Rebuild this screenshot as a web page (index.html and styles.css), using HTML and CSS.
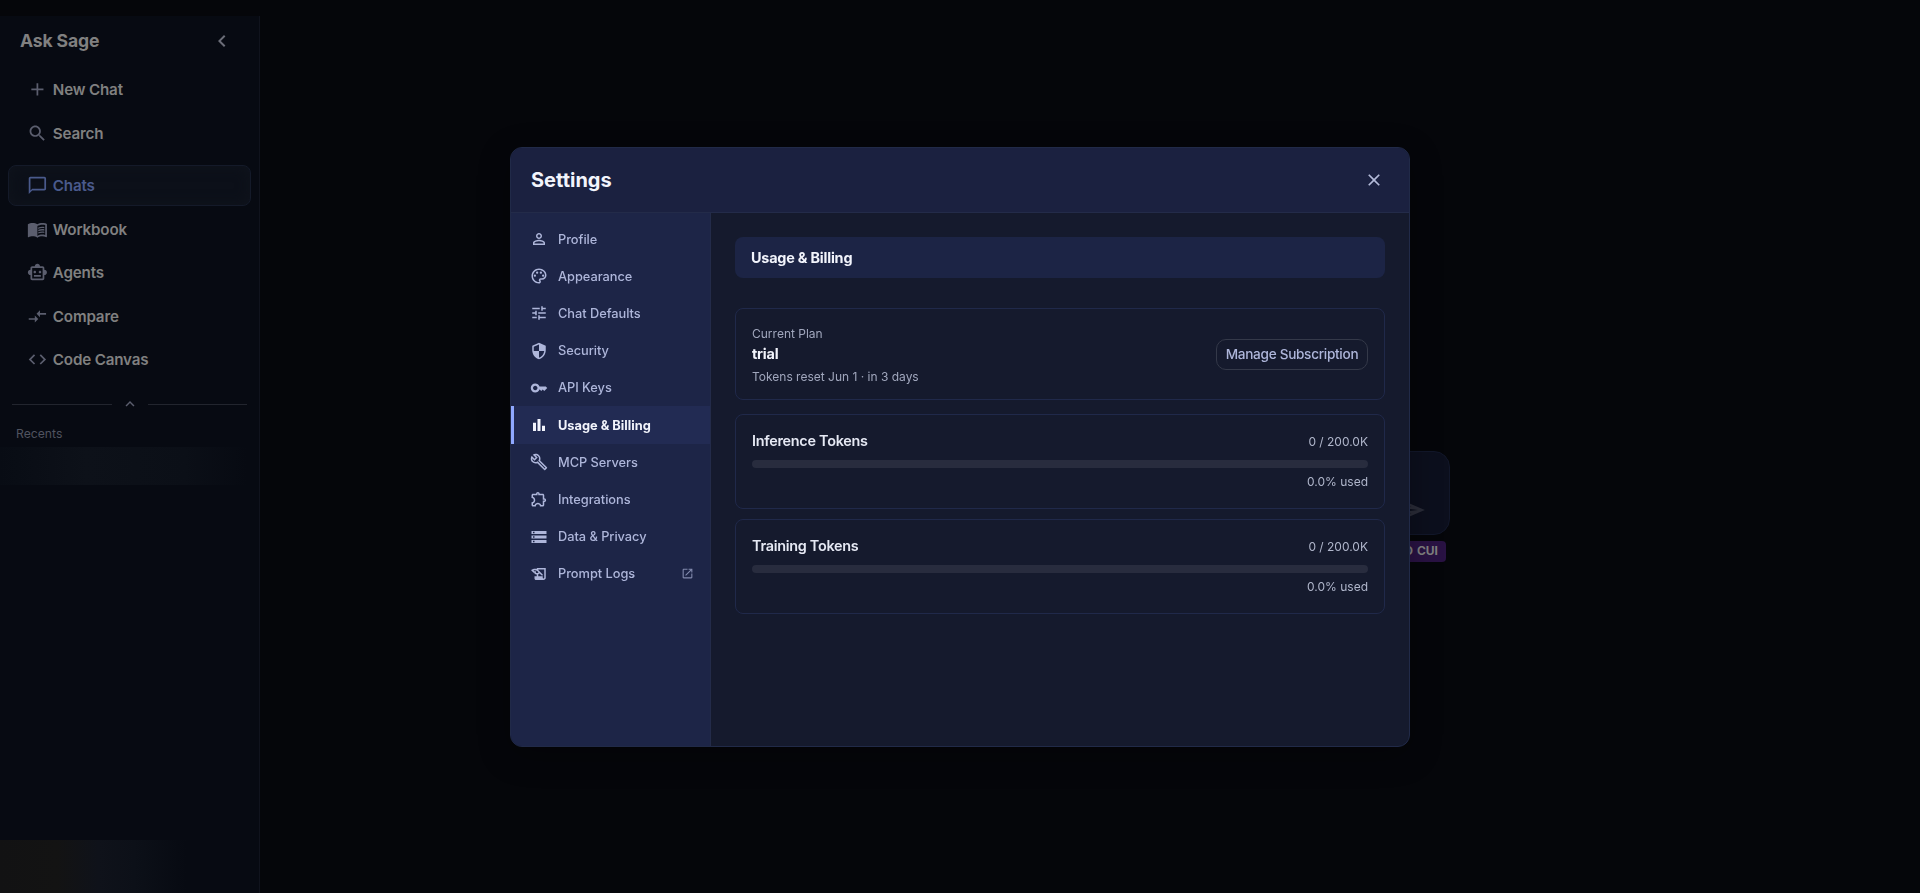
FILE: index.html
```html
<!DOCTYPE html>
<html lang="en">
<head>
  <meta charset="UTF-8">
  <title>Ask Sage</title>
  <link rel="stylesheet" href="styles.css">
</head>
<body>
  <div class="app">
    <aside class="sidebar">
      <div class="sidebar-header">
        <span class="brand">Ask Sage</span>
        <svg class="icon collapse" viewBox="0 0 24 24"><path d="M15.41 7.41 14 6l-6 6 6 6 1.41-1.41L10.83 12z"/></svg>
      </div>
      <nav class="side-nav">
        <a class="side-link"><svg class="icon" viewBox="0 0 24 24"><path d="M19 13h-6v6h-2v-6H5v-2h6V5h2v6h6v2z"/></svg>New Chat</a>
        <a class="side-link"><svg class="icon" viewBox="0 0 24 24"><path d="M15.5 14h-.79l-.28-.27C15.41 12.59 16 11.11 16 9.5 16 5.91 13.09 3 9.5 3S3 5.91 3 9.5 5.91 16 9.5 16c1.61 0 3.09-.59 4.23-1.57l.27.28v.79l5 4.99L20.49 19l-4.99-5zm-6 0C7.01 14 5 11.99 5 9.5S7.01 5 9.5 5 14 7.01 14 9.5 11.99 14 9.5 14z"/></svg>Search</a>
      </nav>
      <nav class="side-nav side-nav-main">
        <a class="side-link active"><svg class="icon" viewBox="0 0 24 24"><path d="M20 2H4c-1.1 0-2 .9-2 2v18l4-4h14c1.1 0 2-.9 2-2V4c0-1.1-.9-2-2-2zm0 14H6l-2 2V4h16v12z"/></svg>Chats</a>
        <a class="side-link"><svg class="icon" viewBox="0 0 24 24"><path d="M21 5c-1.11-.35-2.33-.5-3.5-.5-1.95 0-4.05.4-5.5 1.5-1.45-1.1-3.55-1.5-5.5-1.5S2.45 4.9 1 6v14.65c0 .25.25.5.5.5.1 0 .15-.05.25-.05C3.1 20.45 5.05 20 6.5 20c1.95 0 4.05.4 5.5 1.5 1.35-.85 3.8-1.5 5.5-1.5 1.65 0 3.35.3 4.75 1.05.1.05.15.05.25.05.25 0 .5-.25.5-.5V6c-.6-.45-1.25-.75-2-1zm0 13.5c-1.1-.35-2.3-.5-3.5-.5-1.7 0-4.15.65-5.5 1.5V8c1.35-.85 3.8-1.5 5.5-1.5 1.2 0 2.4.15 3.5.5v11.5z"/><path d="M17.5 10.5c.88 0 1.73.09 2.5.26V9.24c-.79-.15-1.64-.24-2.5-.24-1.7 0-3.24.29-4.5.83v1.66c1.13-.64 2.7-.99 4.5-.99zM13 12.49v1.66c1.13-.64 2.7-.99 4.5-.99.88 0 1.73.09 2.5.26V11.9c-.79-.15-1.64-.24-2.5-.24-1.7 0-3.24.3-4.5.83zM17.5 14.33c-1.7 0-3.24.29-4.5.83v1.66c1.13-.64 2.7-.99 4.5-.99.88 0 1.73.09 2.5.26v-1.52c-.79-.16-1.64-.24-2.5-.24z"/></svg>Workbook</a>
        <a class="side-link"><svg class="icon" viewBox="0 0 24 24"><path d="M20 9V7c0-1.1-.9-2-2-2h-3c0-1.66-1.34-3-3-3S9 3.34 9 5H6c-1.1 0-2 .9-2 2v2c-1.66 0-3 1.34-3 3s1.34 3 3 3v4c0 1.1.9 2 2 2h12c1.1 0 2-.9 2-2v-4c1.66 0 3-1.34 3-3s-1.34-3-3-3zm-2 10H6V7h12v12zm-9-6c-.83 0-1.5-.67-1.5-1.5S8.17 10 9 10s1.5.67 1.5 1.5S9.83 13 9 13zm7.5-1.5c0 .83-.67 1.5-1.5 1.5s-1.5-.67-1.5-1.5.67-1.5 1.5-1.5 1.5.67 1.5 1.5zM8 15h8v2H8v-2z"/></svg>Agents</a>
        <a class="side-link"><svg class="icon" viewBox="0 0 24 24"><path d="M9.01 14H2v2h7.01v3L13 15l-3.99-4v3zm5.98-1v-3H22V8h-7.01V5L11 9l3.99 4z"/></svg>Compare</a>
        <a class="side-link"><svg class="icon" viewBox="0 0 24 24"><path d="M9.4 16.6 4.8 12l4.6-4.6L8 6l-6 6 6 6 1.4-1.4zm5.2 0 4.6-4.6-4.6-4.6L16 6l6 6-6 6-1.4-1.4z"/></svg>Code Canvas</a>
      </nav>
      <div class="divider">
        <svg class="icon" viewBox="0 0 24 24"><path d="m12 8-6 6 1.41 1.41L12 10.83l4.59 4.58L18 14z"/></svg>
      </div>
      <div class="recents-title">Recents</div>
      <div class="recent-item"></div>
      <div class="user-panel"></div>
    </aside>

    <main class="main">
      <div class="composer">
        <svg class="icon send" viewBox="0 0 24 24"><path d="M2.01 21 23 12 2.01 3 2 10l15 2-15 2 .01 7zM4 6.03l7.51 3.22-7.52-1 .01-2.22zm7.5 8.72L4 17.97v-2.22l7.5-1z"/></svg>
      </div>
      <span class="cui-badge">UP TO CUI</span>
    </main>
  </div>

  <div class="overlay">
    <div class="modal">
      <div class="modal-header">
        <h2>Settings</h2>
        <svg class="icon close" viewBox="0 0 24 24"><path d="M19 6.41 17.59 5 12 10.59 6.41 5 5 6.41 10.59 12 5 17.59 6.41 19 12 13.41 17.59 19 19 17.59 13.41 12z"/></svg>
      </div>
      <div class="modal-body">
        <nav class="settings-nav">
          <a class="settings-link"><svg class="icon" viewBox="0 0 24 24"><path d="M12 5.9c1.16 0 2.1.94 2.1 2.1s-.94 2.1-2.1 2.1S9.9 9.16 9.9 8s.94-2.1 2.1-2.1m0 9c2.97 0 6.1 1.46 6.1 2.1v1.1H5.9V17c0-.64 3.13-2.1 6.1-2.1M12 4C9.79 4 8 5.79 8 8s1.79 4 4 4 4-1.79 4-4-1.79-4-4-4zm0 9c-2.67 0-8 1.34-8 4v3h16v-3c0-2.66-5.33-4-8-4z"/></svg>Profile</a>
          <a class="settings-link"><svg class="icon" viewBox="0 0 24 24"><path d="M12 22C6.49 22 2 17.51 2 12S6.49 2 12 2s10 4.04 10 9c0 3.31-2.69 6-6 6h-1.77c-.28 0-.5.22-.5.5 0 .12.05.23.13.33.41.47.64 1.06.64 1.67 0 1.38-1.12 2.5-2.5 2.5zm0-18c-4.41 0-8 3.59-8 8s3.59 8 8 8c.28 0 .5-.22.5-.5 0-.16-.08-.28-.14-.35-.41-.46-.63-1.05-.63-1.65 0-1.38 1.12-2.5 2.5-2.5H16c2.21 0 4-1.79 4-4 0-3.86-3.59-7-8-7z"/><circle cx="6.5" cy="11.5" r="1.5"/><circle cx="9.5" cy="7.5" r="1.5"/><circle cx="14.5" cy="7.5" r="1.5"/><circle cx="17.5" cy="11.5" r="1.5"/></svg>Appearance</a>
          <a class="settings-link"><svg class="icon" viewBox="0 0 24 24"><path d="M3 17v2h6v-2H3zM3 5v2h10V5H3zm10 16v-2h8v-2h-8v-2h-2v6h2zM7 9v2H3v2h4v2h2V9H7zm14 4v-2H11v2h10zm-6-4h2V7h4V5h-4V3h-2v6z"/></svg>Chat Defaults</a>
          <a class="settings-link"><svg class="icon" viewBox="0 0 24 24"><path d="M12 1 3 5v6c0 5.55 3.84 10.74 9 12 5.16-1.26 9-6.45 9-12V5l-9-4zm0 10.99h7c-.53 4.12-3.28 7.79-7 8.94V12H5V6.3l7-3.11v8.8z"/></svg>Security</a>
          <a class="settings-link"><svg class="icon" viewBox="0 0 24 24"><path d="M21 10h-8.35C11.83 7.67 9.61 6 7 6c-3.31 0-6 2.69-6 6s2.69 6 6 6c2.61 0 4.83-1.67 5.65-4H13l2 2 2-2 2 2 4-4.04L21 10zM7 15c-1.65 0-3-1.35-3-3s1.35-3 3-3 3 1.35 3 3-1.35 3-3 3z"/></svg>API Keys</a>
          <a class="settings-link active"><svg class="icon" viewBox="0 0 24 24"><path d="M4 9h4v11H4zm12 4h4v7h-4zm-6-9h4v16h-4z"/></svg>Usage &amp; Billing</a>
          <a class="settings-link"><svg class="icon" viewBox="0 0 24 24"><path d="m22.61 18.99-9.08-9.08c.93-2.34.45-5.1-1.44-7C9.79.61 6.21.4 3.66 2.26L7.5 6.11 6.08 7.52 2.25 3.69C.39 6.23.6 9.82 2.9 12.11c1.86 1.86 4.57 2.35 6.89 1.48l9.11 9.11c.39.39 1.02.39 1.41 0l2.3-2.3c.4-.38.4-1.01 0-1.41zm-3 1.6-9.46-9.46c-.61.45-1.29.72-2 .82-1.36.2-2.79-.21-3.83-1.25C3.37 9.76 2.93 8.5 3 7.26l3.09 3.09 4.24-4.24-3.09-3.09c1.24-.07 2.49.37 3.44 1.31 1.08 1.08 1.49 2.57 1.24 3.96-.12.71-.42 1.37-.88 1.96l9.45 9.45-.88.89z"/></svg>MCP Servers</a>
          <a class="settings-link"><svg class="icon" viewBox="0 0 24 24"><path d="M10.5 4.5c.28 0 .5.22.5.5v2h6v6h2c.28 0 .5.22.5.5s-.22.5-.5.5h-2v6h-2.12c-.68-1.75-2.39-3-4.38-3s-3.7 1.25-4.38 3H4v-2.12c1.75-.68 3-2.39 3-4.38 0-1.99-1.24-3.7-2.99-4.38L4 7h6V5c0-.28.22-.5.5-.5m0-2C9.12 2.5 8 3.62 8 5H4c-1.1 0-1.99.9-1.99 2v3.8h.29c1.49 0 2.7 1.21 2.7 2.7s-1.21 2.7-2.7 2.7H2V20c0 1.1.9 2 2 2h3.8v-.3c0-1.49 1.21-2.7 2.7-2.7s2.7 1.21 2.7 2.7v.3H17c1.1 0 2-.9 2-2v-4c1.38 0 2.5-1.12 2.5-2.5S20.38 11 19 11V7c0-1.1-.9-2-2-2h-4c0-1.38-1.12-2.5-2.5-2.5z"/></svg>Integrations</a>
          <a class="settings-link"><svg class="icon" viewBox="0 0 24 24"><path d="M2 20h20v-4H2v4zm2-3h2v2H4v-2zM2 4v4h20V4H2zm4 3H4V5h2v2zm-4 7h20v-4H2v4zm2-3h2v2H4v-2z"/></svg>Data &amp; Privacy</a>
          <a class="settings-link"><svg class="icon" viewBox="0 0 24 24"><path d="M9 4v1.38c-.83-.33-1.72-.5-2.61-.5-1.79 0-3.58.68-4.95 2.05l3.33 3.33h1.11v1.11c.86.86 1.98 1.31 3.11 1.36V15H6v3c0 1.1.9 2 2 2h10c1.66 0 3-1.34 3-3V4H9zm-1.11 6.41V8.26H5.61L4.57 7.22a5.07 5.07 0 0 1 1.82-.34c1.34 0 2.59.52 3.54 1.46l1.41 1.41-.2.2c-.51.51-1.19.8-1.92.8-.47 0-.93-.12-1.33-.34zM19 17c0 .55-.45 1-1 1s-1-.45-1-1v-2h-6v-2.59c.57-.23 1.1-.57 1.56-1.03l.2-.2L15.59 14H17v-1.41l-6-5.97V6h8v11z"/></svg>Prompt Logs<svg class="icon external" viewBox="0 0 24 24"><path d="M19 19H5V5h7V3H5c-1.11 0-2 .9-2 2v14c0 1.1.89 2 2 2h14c1.1 0 2-.9 2-2v-7h-2v7zM14 3v2h3.59l-9.83 9.83 1.41 1.41L19 6.41V10h2V3h-7z"/></svg></a>
        </nav>
        <section class="settings-content">
          <h3 class="section-title">Usage &amp; Billing</h3>
          <div class="card plan-card">
            <div class="plan-info">
              <span class="plan-label">Current Plan</span>
              <span class="plan-name">trial</span>
              <span class="plan-reset">Tokens reset Jun 1 · in 3 days</span>
            </div>
            <button class="manage-btn">Manage Subscription</button>
          </div>
          <div class="card token-card">
            <div class="token-row">
              <span class="token-name">Inference Tokens</span>
              <span class="token-count">0 / 200.0K</span>
            </div>
            <div class="token-bar"></div>
            <div class="token-used">0.0% used</div>
          </div>
          <div class="card token-card">
            <div class="token-row">
              <span class="token-name">Training Tokens</span>
              <span class="token-count">0 / 200.0K</span>
            </div>
            <div class="token-bar"></div>
            <div class="token-used">0.0% used</div>
          </div>
        </section>
      </div>
    </div>
  </div>
</body>
</html>
```
FILE: styles.css
```css
* {
  box-sizing: border-box;
}

body {
  margin: 0;
  height: 100vh;
  overflow: hidden;
  background-color: #05060a;
  color: #808080;
  font-family: Inter, sans-serif;
}

h2, h3 {
  margin: 0;
}

.icon {
  display: block;
  flex-shrink: 0;
  fill: currentColor;
}

.app {
  display: flex;
  height: 100vh;
  padding-top: 16px;
}

/* Sidebar */
.sidebar {
  display: flex;
  flex-direction: column;
  width: 260px;
  background-color: #070a12;
  border-right: 1px solid #10131d;
}

.sidebar-header {
  display: flex;
  align-items: center;
  justify-content: space-between;
  height: 50px;
  padding: 0 25px 0 20px;
}

.brand {
  margin-top: -1px;
  font-size: 17.6px;
  font-weight: 700;
  letter-spacing: -0.15px;
}

.collapse {
  width: 24px;
  height: 24px;
  color: #6b6d78;
}

.side-nav {
  display: flex;
  flex-direction: column;
  gap: 2.5px;
  padding: 3px 8px 0;
}

.side-nav-main {
  padding-top: 11.6px;
}

.side-link {
  display: flex;
  align-items: center;
  gap: 5px;
  height: 41px;
  padding-left: 18px;
  border: 1px solid transparent;
  border-radius: 8px;
  font-size: 15.2px;
  font-weight: 600;
  letter-spacing: -0.17px;
}

.side-link .icon {
  width: 20.8px;
  height: 20.8px;
  color: #5b5e6e;
}

.side-link.active {
  color: #4a5a8c;
  background-color: #0c1019;
  border-color: #141a29;
  box-shadow: inset 0 0 14px #10141d;
}

.side-link.active .icon {
  color: #4a5a8c;
}

.divider {
  display: flex;
  align-items: center;
  gap: 9px;
  height: 18px;
  margin: 15.4px 12px 0;
  color: #5b5e6e;
}

.divider::before,
.divider::after {
  content: "";
  flex: 1;
  height: 1px;
  background-color: #22252e;
}

.divider .icon {
  width: 18px;
  height: 18px;
}

.recents-title {
  margin: 9px 0 0 16px;
  font-size: 12.2px;
  line-height: 24px;
  color: #50535f;
}

.recent-item {
  height: 38px;
  margin: 1px 12px 0 0;
  background: linear-gradient(90deg, #080c14, #0d1119 35%, #0b0f17 75%, #070a12);
}

.user-panel {
  height: 53px;
  margin-top: auto;
  background: linear-gradient(90deg, #121213, #131313 22%, #0f121a 38%, #0c1018 52%, #070a12 72%);
}

/* Main area behind the dialog */
.main {
  display: flex;
  flex: 1;
  flex-direction: column;
  align-items: flex-end;
  padding: 435px 470px 0 0;
}

.composer {
  display: flex;
  align-items: flex-end;
  justify-content: flex-end;
  width: 720px;
  height: 84px;
  padding: 0 23px 10px;
  background-color: #0c0f1d;
  border: 1px solid #12172a;
  border-radius: 16px;
}

.send {
  width: 28px;
  height: 28px;
  color: #2a2c38;
}

.cui-badge {
  margin: 6px 4px 0 0;
  padding: 0 8px 1px;
  border-radius: 4px;
  background-color: #291243;
  color: #808080;
  font-size: 12px;
  font-weight: 700;
  line-height: 20px;
  word-spacing: 1px;
}

/* Settings dialog */
.overlay {
  position: fixed;
  inset: 0;
  display: flex;
  align-items: center;
  justify-content: center;
}

.modal {
  display: flex;
  flex-direction: column;
  width: 900px;
  height: 600px;
  overflow: hidden;
  background-color: #151a2d;
  border: 1px solid #212a48;
  border-radius: 12px;
  box-shadow: 0 8px 32px rgba(0, 0, 0, 0.3);
}

.modal-header {
  display: flex;
  align-items: center;
  justify-content: space-between;
  height: 65px;
  padding: 0 25px 0 20px;
  background-color: #1b2140;
  border-bottom: 1px solid #232b49;
}

.modal-header h2 {
  font-size: 20px;
  font-weight: 700;
  color: #f2f4fc;
}

.close {
  width: 20px;
  height: 20px;
  color: #b4bbd9;
}

.modal-body {
  display: flex;
  flex: 1;
}

.settings-nav {
  width: 200px;
  padding-top: 8px;
  background-color: #1d2547;
  border-right: 1px solid #232b49;
}

.settings-link {
  display: flex;
  align-items: center;
  gap: 10px;
  height: 37.2px;
  padding: 0 16px;
  border-left: 3px solid transparent;
  font-size: 12.8px;
  font-weight: 500;
  letter-spacing: -0.03px;
  color: #aeb6da;
}

.settings-link .icon {
  width: 18px;
  height: 18px;
}

.settings-link.active {
  background-color: #222b53;
  border-left-color: #8fa8ff;
  color: #f2f4fc;
  font-weight: 700;
  letter-spacing: 0;
}

.settings-link .external {
  width: 13px;
  height: 13px;
  margin-left: auto;
  opacity: 0.7;
}

.settings-content {
  flex: 1;
  padding: 24px;
}

.section-title {
  height: 41px;
  margin-bottom: 30px;
  padding-left: 16px;
  border-radius: 8px;
  background-color: #1c2445;
  color: #f2f4fc;
  font-size: 14.4px;
  font-weight: 700;
  letter-spacing: -0.2px;
  line-height: 41px;
}

.card {
  border: 1px solid #20294a;
  border-radius: 8px;
}

.plan-card {
  display: flex;
  align-items: center;
  justify-content: space-between;
  height: 92px;
  margin-bottom: 14px;
  padding: 0 16px;
}

.plan-info {
  display: flex;
  flex-direction: column;
  padding-top: 5px;
  font-size: 12px;
  color: #a1a7bd;
}

.plan-label {
  line-height: 18px;
}

.plan-name {
  font-size: 14.4px;
  font-weight: 700;
  letter-spacing: -0.2px;
  line-height: 22px;
  color: #f2f4fc;
}

.plan-reset {
  margin-top: 2px;
  line-height: 20px;
}

.manage-btn {
  width: 152px;
  height: 31px;
  margin-top: 1px;
  padding: 0;
  background: transparent;
  border: 1px solid #343949;
  border-radius: 10px;
  color: #aeb6da;
  font-family: inherit;
  font-size: 13.6px;
  font-weight: 500;
  letter-spacing: -0.3px;
}

.token-card {
  height: 95px;
  margin-bottom: 10px;
  padding: 14px 16px 0;
}

.token-row {
  display: flex;
  align-items: center;
  justify-content: space-between;
  height: 24px;
}

.token-name {
  font-size: 14.4px;
  font-weight: 600;
  letter-spacing: -0.27px;
  color: #e6e9f4;
}

.token-count,
.token-used {
  font-size: 12px;
  color: #b0b6cb;
}

.token-count {
  padding-top: 1px;
}

.token-bar {
  height: 8px;
  margin-top: 7px;
  border-radius: 4px;
  background-color: #282c3e;
}

.token-used {
  margin-top: 4px;
  line-height: 20px;
  text-align: right;
}
```
